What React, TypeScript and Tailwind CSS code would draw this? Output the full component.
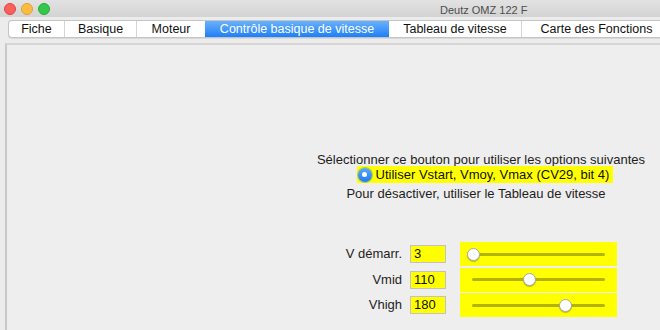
import React from "react";

const tabs = [
  { label: "Fiche", w: "w-[55px]" },
  { label: "Basique", w: "w-[72px]" },
  { label: "Moteur", w: "w-[69px]" },
  { label: "Contrôle basique de vitesse", w: "w-[184px]", active: true },
  { label: "Tableau de vitesse", w: "w-[132px]" },
  { label: "Carte des Fonctions", w: "w-[150px]" },
];

const speeds = [
  { label: "V démarr.", value: 3 },
  { label: "Vmid", value: 110 },
  { label: "Vhigh", value: 180 },
];

function Slider({ value }: { value: number }) {
  // track is 133px wide, range 0..255
  const x = (value / 255) * 133;
  return (
    <div className="flex h-[24px] w-[157px] items-center bg-[#ffff00] px-[12px]">
      <div className="relative h-[3px] w-full rounded-full bg-[#b3b300]">
        <div
          className="absolute top-[-5px] h-[13px] w-[13px] rounded-full border border-[#a8a8a8] bg-white shadow-[0_1px_1px_rgba(0,0,0,0.25)]"
          style={{ left: x - 6.5 }}
        />
      </div>
    </div>
  );
}

export default function App() {
  return (
    <div
      className="flex h-[330px] w-[660px] flex-col overflow-hidden bg-[#ececec] text-[#1d1d1d]"
      style={{ fontFamily: '"Liberation Sans", Arial, sans-serif' }}
    >
      {/* title bar */}
      <div className="relative flex h-[17px] shrink-0 items-center bg-gradient-to-b from-[#e2e2e2] to-[#d3d3d3]">
        <div className="flex items-center gap-[5px] pl-[4px]">
          <span className="h-[12px] w-[12px] rounded-full border border-[#e0443e] bg-[#fc605c]" />
          <span className="h-[12px] w-[12px] rounded-full border border-[#dea236] bg-[#fdbc40]" />
          <span className="h-[12px] w-[12px] rounded-full border border-[#27aa35] bg-[#34c84a]" />
        </div>
        <span className="absolute left-[440px] top-[2px] text-[11px] text-[#4d4d4d]">
          Deutz OMZ 122 F
        </span>
      </div>

      {/* tabs */}
      <div className="flex h-[26px] shrink-0 pl-[8px] pt-[3px]">
        <div className="flex h-[18px] overflow-hidden rounded-l-[4px] border border-r-0 border-[#c4c4c4] bg-white shadow-[0_1px_0_rgba(0,0,0,0.08)]">
          {tabs.map((t, i) => (
            <div
              key={t.label}
              className={`flex ${t.w} shrink-0 items-center justify-center text-[12.5px] leading-none ${
                t.active
                  ? "bg-gradient-to-b from-[#68b1fa] to-[#1a7ff8] text-white"
                  : "text-[#111]"
              } ${i > 0 && !t.active && !tabs[i - 1].active ? "border-l border-[#d4d4d4]" : ""}`}
            >
              {t.label}
            </div>
          ))}
        </div>
      </div>

      {/* panel */}
      <div className="ml-[5px] flex grow flex-col border-l-2 border-t-2 border-l-[#c9c9c9] border-t-[#d6d6d6] bg-[#eeeeee] pt-[107px]">
        <div className="ml-[304px] flex w-[340px] flex-col items-center whitespace-nowrap text-[13px] leading-[15px]">
          <div>Sélectionner ce bouton pour utiliser les options suivantes</div>
          <div className="ml-[8px] mt-[-1px] flex h-[17px] items-center bg-[#ffff00] pl-[1px] pr-[4px]">
            <span className="flex h-[14px] w-[14px] items-center justify-center rounded-full bg-gradient-to-b from-[#5aa9fb] to-[#1b7bf1] shadow-[0_0_0_1px_rgba(30,110,220,0.35)]">
              <span className="h-[5px] w-[5px] rounded-full bg-white" />
            </span>
            <span className="ml-[4px] text-[#111]">Utiliser Vstart, Vmoy, Vmax (CV29, bit 4)</span>
          </div>
          <div className="mr-[10px] mt-[3px]">Pour désactiver, utiliser le Tableau de vitesse</div>
        </div>

        <div className="ml-[316px] mt-[41px] flex flex-col gap-[1.5px]">
          {speeds.map((s) => (
            <div key={s.label} className="flex h-[24px] items-center">
              <span className="w-[80px] pr-[1px] text-right text-[13px]">{s.label}</span>
              <div className="ml-[7px] flex h-[18px] w-[36px] items-center border border-[#c2c2c2] bg-[#ffff00] pl-[3px] text-[13px] text-[#111]">
                {s.value}
              </div>
              <div className="ml-[14px]">
                <Slider value={s.value} />
              </div>
            </div>
          ))}
        </div>
      </div>
    </div>
  );
}
